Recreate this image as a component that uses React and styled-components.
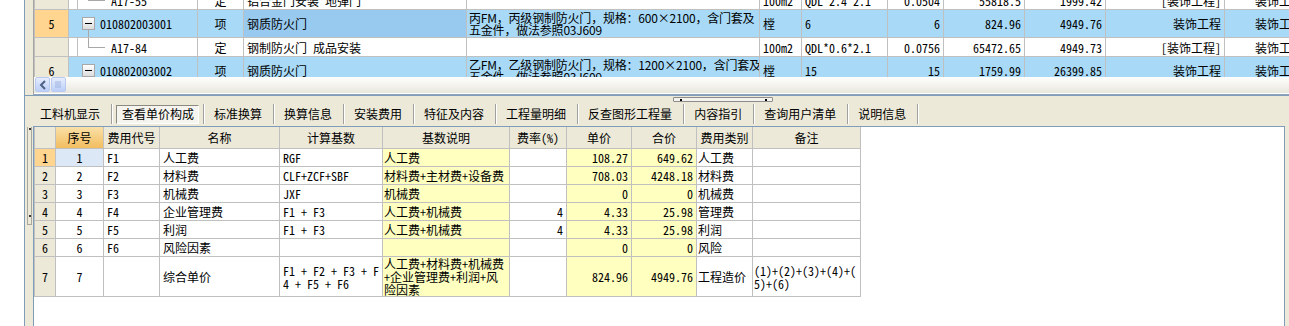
import React from 'react'
import styled, { createGlobalStyle } from 'styled-components'

const GlobalStyle = createGlobalStyle`
  html, body {
    margin: 0;
    padding: 0;
    background: #fff;
    overflow: hidden;
  }
  body {
    font-family: "Noto Sans CJK SC", "DejaVu Sans", sans-serif;
    font-size: 12px;
    font-feature-settings: "hwid" 1;
    color: #000;
  }
`

const BEIGE = '#ece9d8'
const FRAME = '#7f9db9'
const LINE = '#c0c0c0'

const fills = {
  hdr: BEIGE,
  mark: '#ffd590',
  row: '#a8daf8',
  focus: '#98caf0',
  yellow: '#ffffc0',
  cur: '#dde8f6',
  white: '#fff',
}

// 上方清单表格的列宽
const topCols = [34, 9, 120, 46, 223, 293, 42, 86, 56, 81, 81, 119, 100]
// 下方单价构成表格的列宽
const bottomCols = [21, 48, 56, 120, 103, 127, 57, 65, 65, 56, 108]
const sum = (a) => a.reduce((s, w) => s + w, 0)

const topRows = [
  {
    kind: 'sub', h: 19, no: '', code: 'A17-55', type: '定', name: '铝合金门安装 地弹门',
    desc: '', unit: '100m2', expr: 'QDL*2.4*2.1', qty: '0.0504', price: '55818.5', total: '1999.42',
    cat: '[装饰工程]', cat2: '装饰工程',
  },
  {
    kind: 'item', h: 28, no: '5', mark: true, code: '010802003001', type: '项', name: '钢质防火门',
    desc: ['丙FM，丙级钢制防火门，规格：600×2100，含门套及', '五金件，做法参照03J609'],
    unit: '樘', expr: '6', qty: '6', price: '824.96', total: '4949.76', cat: '装饰工程', cat2: '装饰工程',
    focus: true,
  },
  {
    kind: 'sub', h: 19, no: '', code: 'A17-84', type: '定', name: '钢制防火门 成品安装',
    desc: '', unit: '100m2', expr: 'QDL*0.6*2.1', qty: '0.0756', price: '65472.65', total: '4949.73',
    cat: '[装饰工程]', cat2: '装饰工程',
  },
  {
    kind: 'item', h: 28, no: '6', code: '010802003002', type: '项', name: '钢质防火门',
    desc: ['乙FM，乙级钢制防火门，规格：1200×2100，含门套及', '五金件，做法参照03J609'],
    unit: '樘', expr: '15', qty: '15', price: '1759.99', total: '26399.85', cat: '装饰工程', cat2: '装饰工程',
  },
]

const tabs = [
  '工料机显示', '查看单价构成', '标准换算', '换算信息', '安装费用', '特征及内容',
  '工程量明细', '反查图形工程量', '内容指引', '查询用户清单', '说明信息',
]

const heads = ['', '序号', '费用代号', '名称', '计算基数', '基数说明', '费率(%)', '单价', '合价', '费用类别', '备注']

const costRows = [
  { no: '1', code: 'F1', name: '人工费', base: 'RGF', desc: '人工费', rate: '', price: '108.27', total: '649.62', cat: '人工费', note: '' },
  { no: '2', code: 'F2', name: '材料费', base: 'CLF+ZCF+SBF', desc: '材料费+主材费+设备费', rate: '', price: '708.03', total: '4248.18', cat: '材料费', note: '' },
  { no: '3', code: 'F3', name: '机械费', base: 'JXF', desc: '机械费', rate: '', price: '0', total: '0', cat: '机械费', note: '' },
  { no: '4', code: 'F4', name: '企业管理费', base: 'F1 + F3', desc: '人工费+机械费', rate: '4', price: '4.33', total: '25.98', cat: '管理费', note: '' },
  { no: '5', code: 'F5', name: '利润', base: 'F1 + F3', desc: '人工费+机械费', rate: '4', price: '4.33', total: '25.98', cat: '利润', note: '' },
  { no: '6', code: 'F6', name: '风险因素', base: '', desc: '', rate: '', price: '0', total: '0', cat: '风险', note: '' },
  {
    no: '7', code: '', name: '综合单价', h: 39,
    base: ['F1 + F2 + F3 + F', '4 + F5 + F6'],
    desc: ['人工费+材料费+机械费', '+企业管理费+利润+风', '险因素'],
    rate: '', price: '824.96', total: '4949.76', cat: '工程造价',
    note: ['(1)+(2)+(3)+(4)+(', '5)+(6)'],
  },
]

const lines = (v) =>
  Array.isArray(v) ? v.map((l, i) => <React.Fragment key={i}>{i > 0 && <br />}{l}</React.Fragment>) : v

const App = () => {
  return (
    <>
      <GlobalStyle />
      <Window>
        <Margin />
        <Workspace>
          <TopPane>
            <Strip />
            <GridBox>
              <Viewport>
                <Grid $shift={-10} $width={sum(topCols)}>
                  <colgroup>
                    {topCols.map((w, i) => <col key={i} style={{ width: w }} />)}
                  </colgroup>
                  <tbody>
                    {topRows.map((r, i) => {
                      const bg = r.kind === 'item' ? 'row' : 'white'
                      return (
                        <tr key={i}>
                          <Cell $h={r.h} $bg={r.mark ? 'mark' : 'hdr'} $align="center">{r.no}</Cell>
                          {r.kind === 'item' ? (
                            <Cell $h={r.h} $bg="row" colSpan={2} $flush>
                              <Tree>
                                <Toggle />
                                {r.code}
                              </Tree>
                            </Cell>
                          ) : (
                            <>
                              <Cell $h={r.h} $flush />
                              <Cell $h={r.h} $flush>
                                <Tree>
                                  <Elbow />
                                  {r.code}
                                </Tree>
                              </Cell>
                            </>
                          )}
                          <Cell $h={r.h} $bg={bg} $align="center">{r.type}</Cell>
                          <Cell $h={r.h} $bg={r.focus ? 'focus' : bg}>{r.name}</Cell>
                          <Cell $h={r.h} $bg={bg} $wide $tight $pad="0 2px">{lines(r.desc)}</Cell>
                          <Cell $h={r.h} $bg={bg}>{r.unit}</Cell>
                          <Cell $h={r.h} $bg={bg}>{r.expr}</Cell>
                          {[r.qty, r.price, r.total, r.cat].map((v, k) => (
                            <Cell key={k} $h={r.h} $bg={bg} $align="right">{v}</Cell>
                          ))}
                          <Cell $h={r.h} $bg={bg} $pad="0 0 0 30px">{r.cat2}</Cell>
                        </tr>
                      )
                    })}
                  </tbody>
                </Grid>
              </Viewport>
              <HScroll>
                <ScrollBtn>
                  <svg width="8" height="10" viewBox="0 0 8 10">
                    <polyline points="6,1 2,5 6,9" fill="none" stroke="#4d6185" strokeWidth="2" />
                  </svg>
                </ScrollBtn>
                <ScrollBtn>
                  <svg width="7" height="7" viewBox="0 0 7 7">
                    <path d="M1 0v7M3 0v7M5 0v7" stroke="#9fb3e0" strokeWidth="1" />
                  </svg>
                </ScrollBtn>
              </HScroll>
            </GridBox>
          </TopPane>

          <TabBar>
            <SplitGrip />
            {tabs.map((t, i) => (
              <Tab key={t} $active={i === 1}>
                {i === 1 ? <ActiveLabel>{t}</ActiveLabel> : t}
              </Tab>
            ))}
          </TabBar>

          <BottomPane>
            <Strip>
              <SideGrip />
            </Strip>
            <Panel>
              <Grid $width={sum(bottomCols)}>
                <colgroup>
                  {bottomCols.map((w, i) => <col key={i} style={{ width: w }} />)}
                </colgroup>
                <thead>
                  <tr>
                    {heads.map((h, i) => (
                      <Head key={i} $hot={i === 1}>{h}</Head>
                    ))}
                  </tr>
                </thead>
                <tbody>
                  {costRows.map((r, i) => {
                    const h = r.h || 18
                    return (
                      <tr key={r.no}>
                        <Cell $h={h} $bg={i === 0 ? 'mark' : 'hdr'} $align="center">{r.no}</Cell>
                        <Cell $h={h} $bg={i === 0 ? 'cur' : 'white'} $align="center">{r.no}</Cell>
                        <Cell $h={h}>{r.code}</Cell>
                        <Cell $h={h}>{r.name}</Cell>
                        <Cell $h={h}>{lines(r.base)}</Cell>
                        <Cell $h={h} $bg="yellow" $pad="0 1px">{lines(r.desc)}</Cell>
                        <Cell $h={h} $align="right">{r.rate}</Cell>
                        <Cell $h={h} $bg="yellow" $align="right">{r.price}</Cell>
                        <Cell $h={h} $bg="yellow" $align="right">{r.total}</Cell>
                        <Cell $h={h} $pad="0 1px">{r.cat}</Cell>
                        <Cell $h={h} $pad="0 1px">{lines(r.note)}</Cell>
                      </tr>
                    )
                  })}
                </tbody>
              </Grid>
            </Panel>
          </BottomPane>
        </Workspace>
      </Window>
    </>
  )
}

export default App

const Window = styled.div`
  display: flex;
  width: 1289px;
  height: 326px;
  background: #fff;
  overflow: hidden;
`

const Margin = styled.div`
  flex: none;
  width: 24px;
  background: #fff;
`

const Workspace = styled.div`
  flex: 1;
  min-width: 0;
  display: flex;
  flex-direction: column;
  background: ${BEIGE};
  border-left: 1px solid ${FRAME};
`

const TopPane = styled.div`
  flex: none;
  display: flex;
  height: 95px;
`

const Strip = styled.div`
  flex: none;
  width: 8px;
  display: flex;
  flex-direction: column;
  align-items: center;
`

const SideGrip = styled.div`
  width: 5px;
  height: 98px;
  margin-top: 1px;
  border: 1px solid #a7a7a0;
  border-top: none;
  background:
    radial-gradient(circle at 2px 2px, #333 0.7px, transparent 1.1px),
    radial-gradient(circle at 2px 89px, #333 0.7px, transparent 1.1px);
  box-sizing: border-box;
`

const GridBox = styled.div`
  flex: 1;
  min-width: 0;
  display: flex;
  flex-direction: column;
  border-left: 1px solid #a5a5a5;
  border-bottom: 1px solid #8ea3bd;
  background: #fff;
  overflow: hidden;
`

const Viewport = styled.div`
  height: 77px;
  overflow: hidden;
  flex: none;
`

const Grid = styled.table`
  border-collapse: collapse;
  table-layout: fixed;
  margin-top: ${(p) => p.$shift || 0}px;
  width: ${(p) => p.$width}px;
  min-width: ${(p) => p.$width}px;
`

const Cell = styled.td`
  border: 1px solid ${LINE};
  height: ${(p) => p.$h}px;
  padding: ${(p) => (p.$flush ? '0' : p.$pad || '0 3px')};
  background: ${(p) => fills[p.$bg || 'white']};
  text-align: ${(p) => p.$align || 'left'};
  vertical-align: middle;
  white-space: pre;
  overflow: hidden;
  line-height: ${(p) => (p.$tight ? 12 : 13)}px;
  box-sizing: border-box;
  font-feature-settings: ${(p) => (p.$wide ? 'normal' : '"hwid" 1')};
  letter-spacing: ${(p) => (p.$wide ? '-0.2px' : 'normal')};
`

const Head = styled.th`
  height: 21px;
  padding: 0;
  font-weight: normal;
  text-align: center;
  white-space: nowrap;
  overflow: hidden;
  border: 1px solid ${LINE};
  border-top: none;
  background: ${(p) => (p.$hot ? 'linear-gradient(#fae0a6, #f2bd60)' : BEIGE)};
`

const Tree = styled.div`
  display: flex;
  align-items: center;
  height: 100%;
`

const Toggle = styled.span`
  position: relative;
  flex: none;
  width: 11px;
  height: 11px;
  margin: 0 5px 0 13px;
  border: 1px solid #a8a8a8;
  background: linear-gradient(#fff, #dcdcdc);
  display: flex;
  align-items: center;
  justify-content: center;

  &::before {
    content: '';
    width: 7px;
    height: 1px;
    background: #000;
  }
  &::after {
    content: '';
    position: absolute;
    left: 5px;
    top: 12px;
    height: 7px;
    border-left: 1px solid #a8a8a8;
  }
`

const Elbow = styled.span`
  flex: none;
  align-self: flex-start;
  width: 16px;
  height: 9px;
  margin: 0 6px 0 10px;
  border-left: 1px solid #a8a8a8;
  border-bottom: 1px solid #a8a8a8;
`

const HScroll = styled.div`
  flex: none;
  display: flex;
  gap: 1px;
  height: 16px;
  padding-left: 1px;
  background: linear-gradient(#fefefe, #f3f2ec 55%, #e8e6de);
`

const ScrollBtn = styled.div`
  width: 15px;
  height: 15px;
  border: 1px solid #b9caf0;
  border-radius: 2px;
  background: linear-gradient(#e6edfd, #bccff8);
  display: flex;
  align-items: center;
  justify-content: center;
  box-sizing: border-box;
`

const TabBar = styled.div`
  position: relative;
  flex: none;
  display: flex;
  align-items: flex-start;
  height: 31px;
  padding: 8px 0 0 5px;
  box-sizing: border-box;
  border-top: 1px solid ${FRAME};
`

const SplitGrip = styled.div`
  position: absolute;
  top: 1px;
  left: 648px;
  width: 100px;
  height: 5px;
  border: 1px solid #8c8c8c;
  border-radius: 1px;
  background:
    radial-gradient(circle at 7px 2px, #000 0.8px, transparent 1.2px),
    radial-gradient(circle at 92px 2px, #000 0.8px, transparent 1.2px),
    #f4f3ee;
  box-sizing: border-box;
`

const Tab = styled.div`
  flex: none;
  display: flex;
  align-items: center;
  height: 20px;
  padding: ${(p) => (p.$active ? '0 4px' : '0 11px 0 10px')};
  border-right: 1px solid #a0a0a0;
  box-shadow: 1px 0 0 #fff;
  white-space: nowrap;
  line-height: 12px;
`

const ActiveLabel = styled.span`
  display: flex;
  align-items: center;
  height: 19px;
  padding: 0 4px 0 5px;
  border: 1px solid;
  border-color: #8a8a80 #fff #fff #8a8a80;
  background: #f5f4ef;
  box-sizing: border-box;
`

const BottomPane = styled.div`
  flex: 1;
  display: flex;
  min-height: 0;
`

const Panel = styled.div`
  flex: 1;
  min-width: 0;
  margin-right: 4px;
  background: #fff;
  border: 1px solid ${FRAME};
  border-bottom: none;
  overflow: hidden;
`
